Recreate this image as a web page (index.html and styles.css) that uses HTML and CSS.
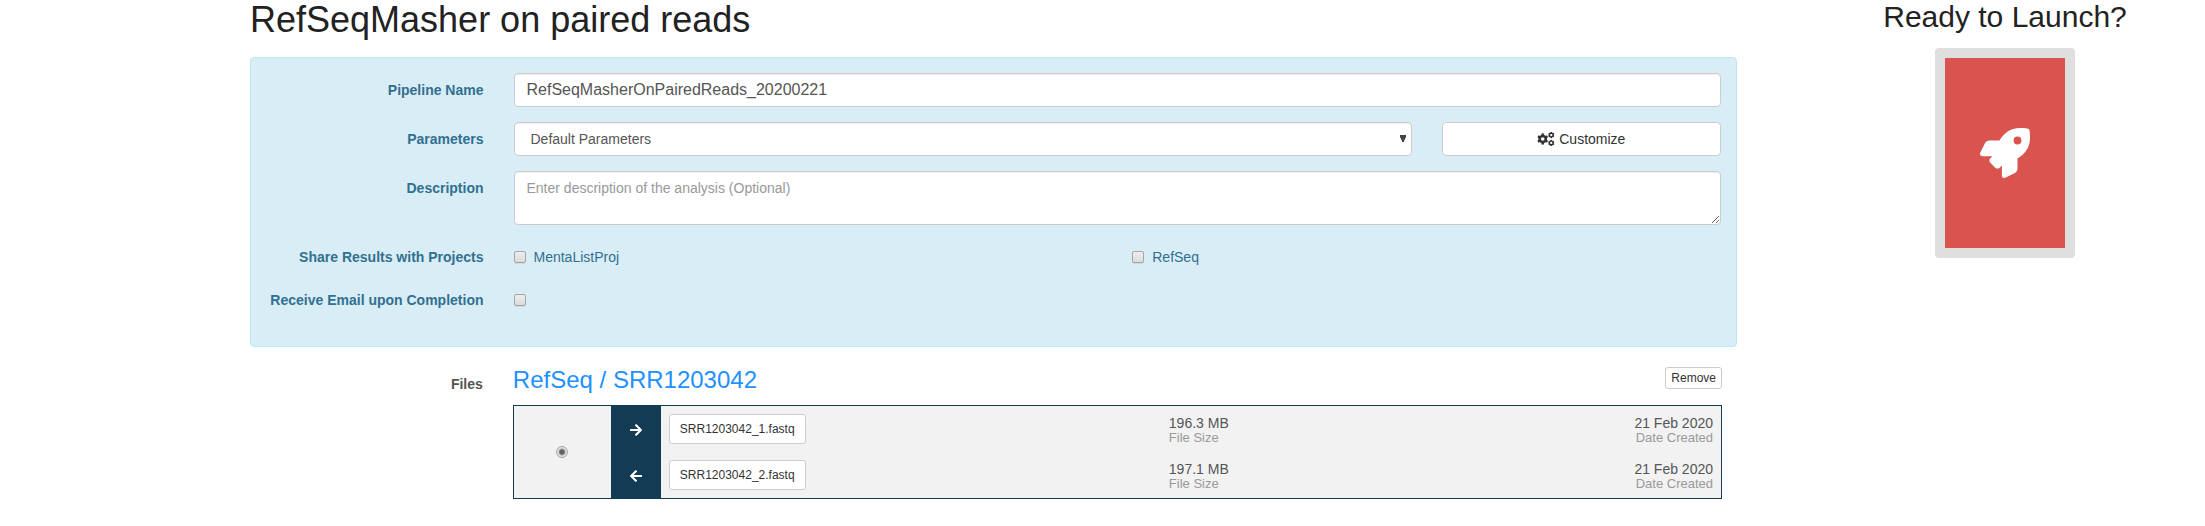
FILE: index.html
```html
<!DOCTYPE html>
<html lang="en">
<head>
<meta charset="utf-8">
<title>RefSeqMasher on paired reads</title>
<link rel="stylesheet" href="styles.css">
</head>
<body>
<div class="page">
  <main class="main">
    <h1 class="title">RefSeqMasher on paired reads</h1>

    <form class="panel">
      <div class="row">
        <label class="row-label" for="name">Pipeline Name</label>
        <div class="row-body">
          <input class="control control-name" id="name" type="text" value="RefSeqMasherOnPairedReads_20200221">
        </div>
      </div>
      <div class="row">
        <label class="row-label" for="params">Parameters</label>
        <div class="row-body params">
          <div class="select-wrap">
            <select class="control control-select" id="params">
              <option>Default Parameters</option>
            </select>
            <svg class="caret" viewBox="0 0 6 7" aria-hidden="true"><path d="M0 0h6v2L4 6v1H2V6L0 2z"/></svg>
          </div>
          <button class="btn btn-customize" type="button">
            <svg class="cogs" viewBox="0 0 640 512" aria-hidden="true">
              <circle cx="200" cy="256" r="160"/>
              <g>
                <path d="M156 52h88v408h-88z"/>
                <path d="M156 52h88v408h-88z" transform="rotate(60 200 256)"/>
                <path d="M156 52h88v408h-88z" transform="rotate(120 200 256)"/>
              </g>
              <circle class="hole" cx="200" cy="256" r="66"/>
              <g id="small-cog">
                <path d="M480 0h64v224h-64z"/>
                <path d="M480 0h64v224h-64z" transform="rotate(60 512 112)"/>
                <path d="M480 0h64v224h-64z" transform="rotate(120 512 112)"/>
                <circle cx="512" cy="112" r="92"/>
                <circle class="hole" cx="512" cy="112" r="42"/>
              </g>
              <use href="#small-cog" y="288"/>
            </svg>
            Customize
          </button>
        </div>
      </div>
      <div class="row">
        <label class="row-label" for="description">Description</label>
        <div class="row-body">
          <textarea class="control control-area" id="description" rows="2" placeholder="Enter description of the analysis (Optional)"></textarea>
        </div>
      </div>
      <div class="row row-checks" role="group" aria-labelledby="share-label">
        <span class="row-label" id="share-label">Share Results with Projects</span>
        <div class="row-body checks">
          <label class="check"><input class="checkbox" type="checkbox">MentaListProj</label>
          <label class="check"><input class="checkbox" type="checkbox">RefSeq</label>
        </div>
      </div>
      <div class="row row-checks">
        <label class="row-label" for="email">Receive Email upon Completion</label>
        <div class="row-body checks">
          <div class="check"><input class="checkbox" id="email" type="checkbox"></div>
        </div>
      </div>
    </form>

    <section class="row files">
      <span class="row-label">Files</span>
      <div class="row-body files-body">
        <header class="sample">
          <h2 class="sample-name"><a class="link" href="#">RefSeq</a> / <a class="link" href="#">SRR1203042</a></h2>
          <button class="btn btn-remove" type="button">Remove</button>
        </header>
        <table class="pair">
          <tbody>
            <tr>
              <td class="cell-radio" rowspan="2"><input class="radio" type="radio" name="pair" aria-label="SRR1203042" checked></td>
              <td class="cell-arrow">
                <svg class="arrow" viewBox="0 0 448 512" aria-hidden="true"><path id="arrow" d="M190.5 66.9l22.2-22.2c9.4-9.4 24.6-9.4 33.9 0L441 239c9.4 9.4 9.4 24.6 0 33.9L246.6 467.3c-9.4 9.4-24.6 9.4-33.9 0l-22.2-22.2c-9.5-9.5-9.3-25 .4-34.3L311.4 296H24c-13.3 0-24-10.7-24-24v-32c0-13.3 10.7-24 24-24h287.4L190.9 101.2c-9.8-9.3-10-24.8-.4-34.3z"/></svg>
              </td>
              <td class="cell-file"><button class="btn btn-file" type="button">SRR1203042_1.fastq</button></td>
              <td class="cell-size">196.3 MB<div class="hint">File Size</div></td>
              <td class="cell-date">21 Feb 2020<div class="hint">Date Created</div></td>
            </tr>
            <tr>
              <td class="cell-arrow">
                <svg class="arrow" viewBox="0 0 448 512" aria-hidden="true"><use href="#arrow" transform="rotate(180 224 256)"/></svg>
              </td>
              <td class="cell-file"><button class="btn btn-file" type="button">SRR1203042_2.fastq</button></td>
              <td class="cell-size">197.1 MB<div class="hint">File Size</div></td>
              <td class="cell-date">21 Feb 2020<div class="hint">Date Created</div></td>
            </tr>
          </tbody>
        </table>
      </div>
    </section>
  </main>

  <aside class="launch">
    <h2 class="launch-title">Ready to Launch?</h2>
    <button class="launch-button" type="button" aria-label="Launch pipeline">
      <svg class="rocket" viewBox="0 0 512 512" aria-hidden="true"><path d="M505.12 19.09c-1.19-5.53-6.66-11-12.21-12.19C460.72 0 435.51 0 410.41 0 307.18 0 245.27 55.2 199.05 128H94.84c-16.35.02-35.56 11.88-42.89 26.48L2.52 253.3A28.4 28.4 0 0 0 0 264a24 24 0 0 0 24 24h103.82l-22.48 22.47c-11.36 11.36-12.99 32.26 0 45.25l50.91 50.91c11.15 11.18 32.15 13.15 45.27 0L224 384.16V488a24 24 0 0 0 24 24 28.56 28.56 0 0 0 10.71-2.52l98.73-49.39c14.63-7.29 26.51-26.5 26.51-42.86V312.8c72.6-46.32 128.03-108.41 128.03-211.1.1-25.2.1-50.4-6.86-82.61zM384.04 168a40 40 0 1 1 40-40 40 40 0 0 1-40 40z"/></svg>
    </button>
  </aside>
</div>
</body>
</html>
```

FILE: styles.css
```css
* {
  box-sizing: border-box;
}

body {
  margin: 0;
  background: #fff;
  color: #555;
  font-family: "Liberation Sans", Arial, sans-serif;
  font-size: 14px;
  line-height: 20px;
}

input,
select,
textarea,
button {
  margin: 0;
  font-family: inherit;
}

.page {
  display: grid;
  grid-template-columns: minmax(0, 1fr) 400px;
  gap: 68px;
  padding-left: 250px;
}

.title {
  margin: 0 0 17px;
  color: #222;
  font-size: 36px;
  font-weight: 400;
  line-height: 40px;
}

.panel {
  display: grid;
  gap: 15px;
  padding: 15px 0 35px;
  border: 1px solid #bce8f1;
  border-radius: 4px;
  background: #d9edf7;
  color: #31708f;
}

.row {
  display: grid;
  grid-template-columns: minmax(0, 1fr) minmax(0, 5fr);
}

.row-label {
  padding: 7px 15px 0;
  font-weight: 700;
  text-align: right;
}

.row-body {
  padding: 0 15px;
}

.control {
  display: block;
  width: 100%;
  height: 34px;
  padding: 6px 12px;
  border: 1px solid #ccc;
  border-radius: 4px;
  background: #fff;
  box-shadow: inset 0 1px 1px rgba(0, 0, 0, 0.075);
  color: #555;
  font-size: 14px;
  line-height: 20px;
}

.control-name {
  font-size: 16px;
}

.control-area {
  height: 54px;
  resize: vertical;
}

.control-area::placeholder {
  color: #999;
}

.params {
  display: grid;
  grid-template-columns: minmax(0, 3fr) minmax(0, 1fr);
  padding: 0;
}

.select-wrap {
  position: relative;
  padding: 0 15px;
}

.control-select {
  appearance: none;
  padding-left: 16px;
}

.caret {
  position: absolute;
  top: 13px;
  right: 21px;
  width: 6px;
  height: 7px;
  fill: #444;
  pointer-events: none;
}

.btn {
  border: 1px solid #ccc;
  border-radius: 4px;
  background: #fff;
  color: #333;
  font-size: 14px;
  line-height: 20px;
}

.btn-customize {
  display: flex;
  align-items: center;
  justify-content: center;
  gap: 4px;
  margin: 0 15px;
}

.cogs {
  width: 18px;
  height: 14px;
  fill: #333;
}

.cogs .hole {
  fill: #fff;
}

.row-checks {
  min-height: 28px;
}

.checks {
  display: grid;
  grid-template-columns: repeat(2, minmax(0, 1fr));
  gap: 30px;
  padding-top: 7px;
}

.check {
  display: flex;
  align-items: center;
  gap: 8px;
  height: 20px;
}

.checkbox {
  appearance: none;
  width: 12px;
  height: 12px;
  border: 1px solid #a6a6a6;
  border-radius: 2px;
  background: linear-gradient(#ededed, #dcdcdc);
  box-shadow: 0 1px 0 rgba(0, 0, 0, 0.08);
}

.files {
  margin-top: 20px;
}

.sample {
  display: flex;
  align-items: flex-start;
  justify-content: space-between;
  height: 38px;
}

.sample-name {
  margin: 0;
  color: #1e90ff;
  font-size: 24px;
  font-weight: 400;
  line-height: 26px;
}

.link {
  color: inherit;
  text-decoration: none;
}

.btn-remove {
  padding: 1px 5px;
  border-radius: 3px;
  font-size: 12px;
  line-height: 18px;
}

.pair {
  width: 100%;
  border: 1px solid #143b54;
  border-spacing: 0;
  background: #f2f2f2;
}

.pair td {
  height: 46px;
  padding: 0 8px;
}

.pair .cell-radio {
  width: 97px;
  padding-bottom: 2px;
  text-align: center;
}

.radio {
  appearance: none;
  display: inline-block;
  width: 12px;
  height: 12px;
  border: 1px solid #a8a8a8;
  border-radius: 50%;
  background: radial-gradient(circle, #606060 0 2px, #e2e2e2 4px);
  vertical-align: middle;
}

.pair .cell-arrow {
  width: 50px;
  background: #143b54;
  text-align: center;
}

.arrow {
  width: 12px;
  height: 14px;
  fill: #fff;
  vertical-align: middle;
}

.btn-file {
  display: block;
  padding: 5px 10px;
  border-radius: 3px;
  font-size: 12px;
  line-height: 18px;
}

.pair .cell-file {
  width: 500px;
}

.pair .cell-size,
.pair .cell-date {
  padding-top: 2px;
  line-height: 16px;
}

.pair .cell-date {
  text-align: right;
}

.hint {
  color: #999;
  font-size: 13px;
  line-height: 14px;
}

.launch {
  text-align: center;
}

.launch-title {
  margin: 0 0 14px;
  color: #222;
  font-size: 30px;
  font-weight: 400;
  line-height: 34px;
}

.launch-button {
  width: 140px;
  height: 210px;
  padding: 0;
  border: 10px solid #dfdfdf;
  border-radius: 4px;
  background: #d9534f;
}

.rocket {
  width: 50px;
  height: 50px;
  fill: #fff;
  vertical-align: middle;
}
```
